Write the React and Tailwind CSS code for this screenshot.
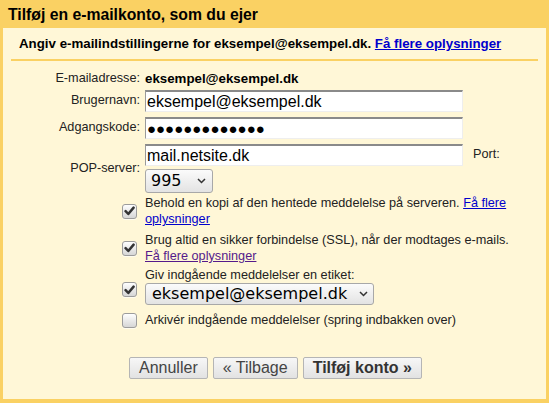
import React from "react";

function Checkbox({ checked }) {
  return (
    <div className="w-[15px] h-[15px] rounded-[3px] border border-[#9c9c9c] bg-linear-to-b from-[#fefefe] to-[#d6d6d6] flex items-center justify-center shadow-[0_1px_0_rgba(255,255,255,0.6)]">
      {checked && (
        <svg width="11" height="10" viewBox="0 0 11 10">
          <path d="M1.6 5.2 L4.3 8 L9.6 1.6" fill="none" stroke="#333" strokeWidth="2.5" strokeLinecap="round" strokeLinejoin="round" />
        </svg>
      )}
    </div>
  );
}

function Chevron() {
  return (
    <svg width="9" height="6" viewBox="0 0 9 6">
      <path d="M1 1 L4.5 4.5 L8 1" fill="none" stroke="#333" strokeWidth="1.5" />
    </svg>
  );
}

function Field({ children }) {
  return (
    <div className="w-[318px] h-[22px] bg-white border-t-2 border-l border-t-[#8a8a8a] border-l-[#9a9a9a] border-r border-b border-r-[#eeeeee] border-b-[#eeeeee] pl-[1px] flex items-center text-[16px] text-black font-['Liberation_Sans',Arial,sans-serif] leading-none overflow-hidden">
      {children}
    </div>
  );
}

function Button({ children, bold }) {
  return (
    <button className={"h-[22px] px-[9px] rounded-[2px] border border-[#b5b5b5] bg-linear-to-b from-[#f7f7f7] to-[#e2e2e2] text-[16px] leading-none font-['Liberation_Sans',Arial,sans-serif] " + (bold ? "font-bold text-[#333]" : "text-[#444]")}>
      {children}
    </button>
  );
}

export default function App() {
  return (
    <div className="w-[549px] h-[403px] bg-[#fad163] px-[3px] pb-[4px] flex flex-col font-['Liberation_Sans',Arial,sans-serif] text-[#222]">
      <div className="h-[28px] pl-[5px] pt-[1px] flex items-center text-[15.75px] font-bold text-black">
        Tilføj en e-mailkonto, som du ejer
      </div>
      <div className="flex-1 bg-[#fff7d7] flex flex-col">
        <div className="pt-[8px] pl-[16px] h-[24px] leading-[16px] text-[13.3px] font-bold text-black whitespace-nowrap">
          Angiv e-mailindstillingerne for eksempel@eksempel.dk.{" "}
          <a href="#" className="text-[#0000cc] underline">Få flere oplysninger</a>
        </div>
        <div className="mt-[7px] mx-[8px] h-[2px] bg-[#fad163]" />

        <div className="flex flex-col text-[12.7px]">
          <div className="mt-[9px] h-[18px] flex items-center">
            <div className="w-[137px] text-right">E-mailadresse:</div>
            <div className="ml-[5px] font-bold text-[13.3px] text-black">eksempel@eksempel.dk</div>
          </div>

          <div className="mt-[2px] flex items-center">
            <div className="w-[137px] text-right">Brugernavn:</div>
            <div className="ml-[5px]"><Field>eksempel@eksempel.dk</Field></div>
          </div>

          <div className="mt-[5px] flex items-center">
            <div className="w-[137px] text-right">Adgangskode:</div>
            <div className="ml-[5px]">
              <Field>
                <span className="text-[15px]">●●●●●●●●●●●●●</span>
              </Field>
            </div>
          </div>

          <div className="mt-[5px] flex items-center">
            <div className="w-[137px] text-right">POP-server:</div>
            <div className="ml-[5px] flex flex-col">
              <div className="flex items-center">
                <Field>mail.netsite.dk</Field>
                <span className="ml-[10px]">Port:</span>
              </div>
              <div className="mt-[3px] w-[68px] h-[24px] rounded-[3px] border border-[#a8a8a8] bg-linear-to-b from-[#fbfbfb] to-[#e3e3e3] flex items-center justify-between pl-[5px] pr-[6px] text-[16px] text-black font-['DejaVu_Sans',sans-serif]">
                <span>995</span>
                <Chevron />
              </div>
            </div>
          </div>

          <div className="mt-[2px] flex items-center">
            <div className="w-[137px] flex justify-end pr-[3px]"><Checkbox checked /></div>
            <div className="ml-[5px] w-[380px] leading-[16px]">
              Behold en kopi af den hentede meddelelse på serveren.{" "}
              <a href="#" className="text-[#0000cc] underline">Få flere oplysninger</a>
            </div>
          </div>

          <div className="mt-[5px] flex items-center">
            <div className="w-[137px] flex justify-end pr-[3px]"><Checkbox checked /></div>
            <div className="ml-[5px] w-[380px] leading-[16px]">
              Brug altid en sikker forbindelse (SSL), når der modtages e-mails.{" "}
              <a href="#" className="text-[#551a8b] underline">Få flere oplysninger</a>
            </div>
          </div>

          <div className="mt-[3px] flex items-start">
            <div className="w-[137px] flex justify-end pr-[3px] mt-[15px]"><Checkbox checked /></div>
            <div className="ml-[5px] flex flex-col items-start">
              <div className="leading-[16px]">Giv indgående meddelelser en etiket:</div>
              <div className="w-[229px] h-[22px] rounded-[3px] border border-[#a8a8a8] bg-linear-to-b from-[#fbfbfb] to-[#e3e3e3] flex items-center justify-between pl-[6px] pr-[5px] text-[16px] text-black font-['DejaVu_Sans',sans-serif]">
                <span>eksempel@eksempel.dk</span>
                <Chevron />
              </div>
            </div>
          </div>

          <div className="mt-[7px] flex items-center">
            <div className="w-[137px] flex justify-end pr-[3px]"><Checkbox /></div>
            <div className="ml-[5px] leading-[16px]">Arkivér indgående meddelelser (spring indbakken over)</div>
          </div>

          <div className="mt-[29px] ml-[126px] flex gap-[5px]">
            <Button>Annuller</Button>
            <Button>« Tilbage</Button>
            <Button bold>Tilføj konto »</Button>
          </div>
        </div>
      </div>
    </div>
  );
}
